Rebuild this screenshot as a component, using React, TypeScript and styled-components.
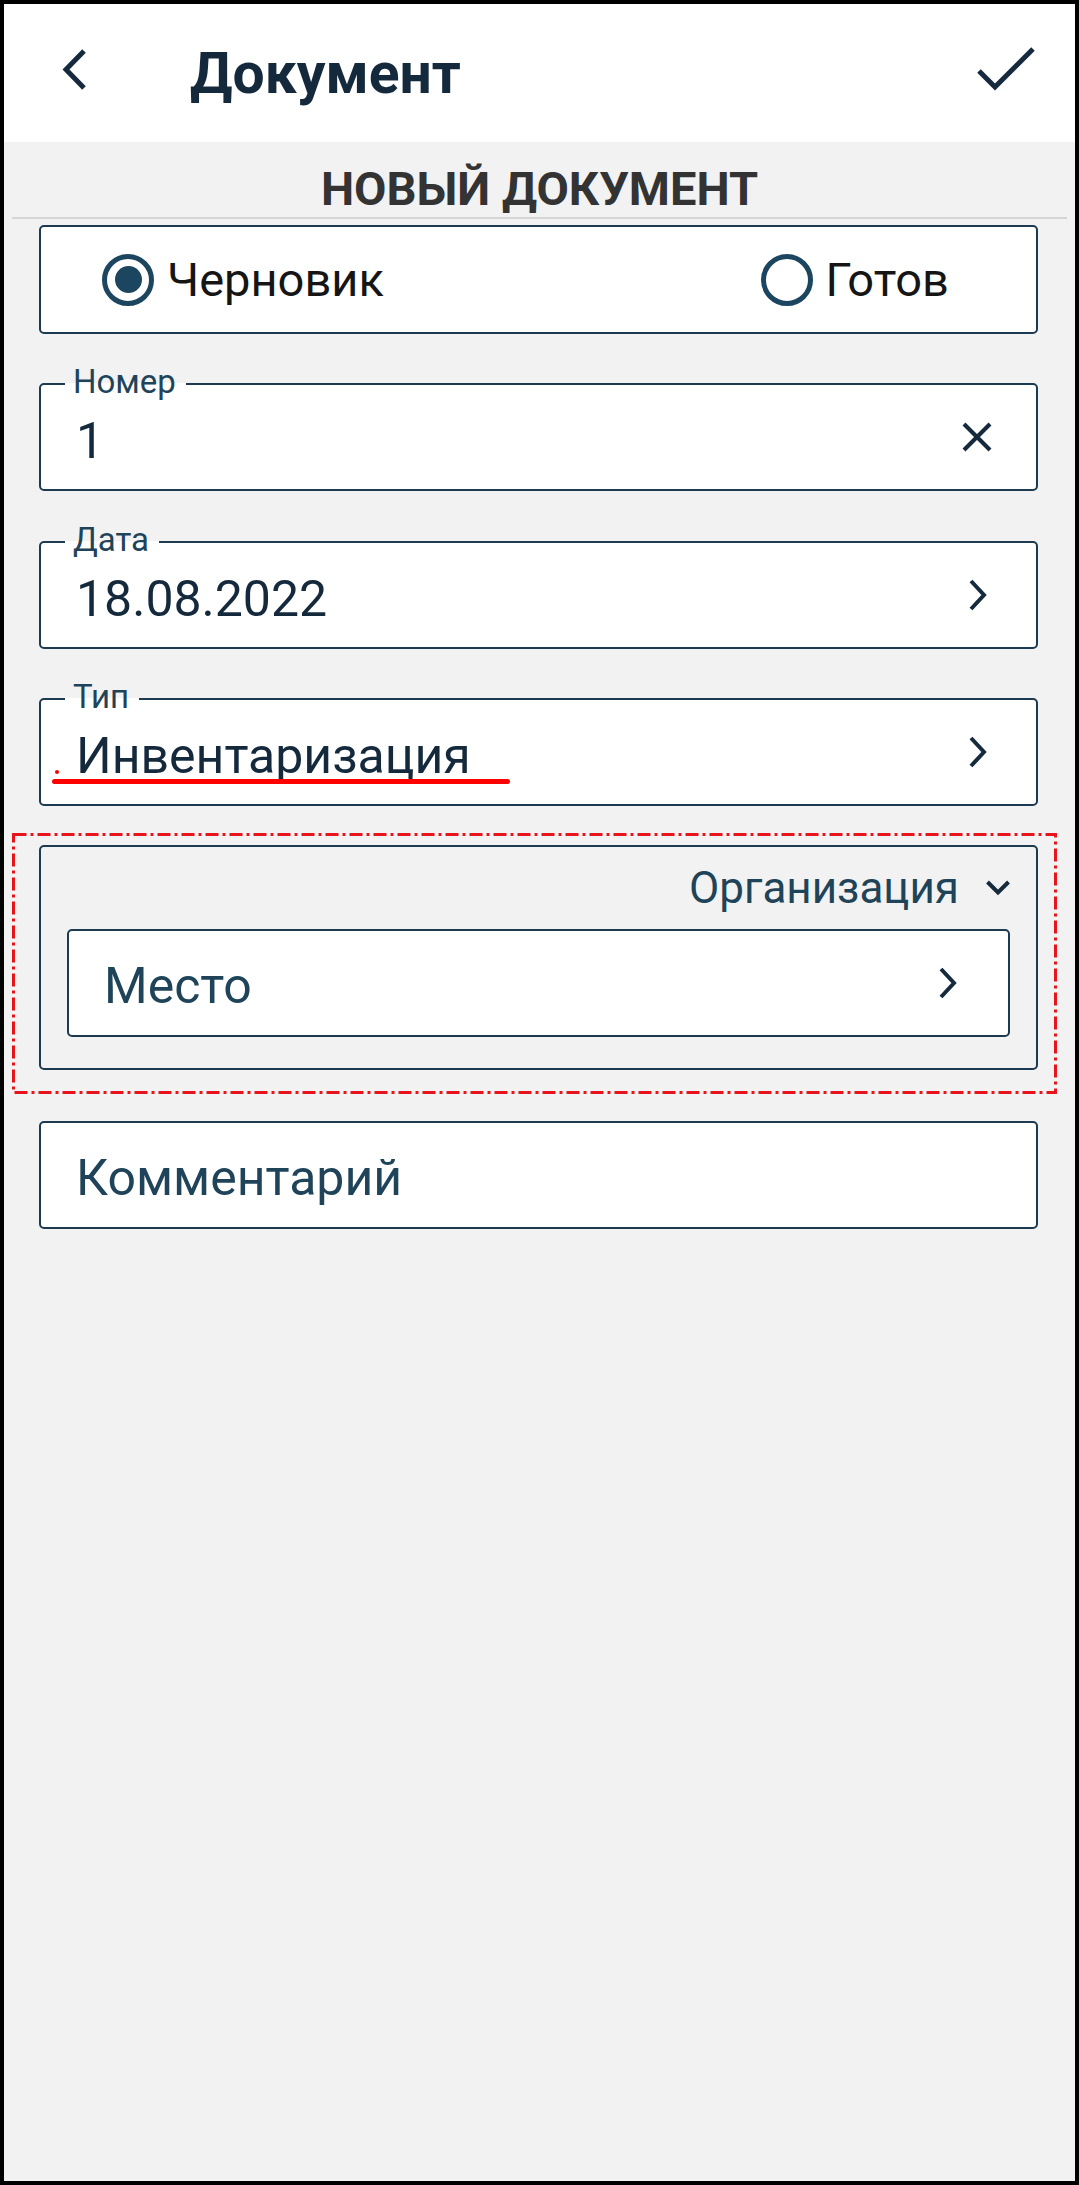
import * as React from 'react';
import styled, { createGlobalStyle } from 'styled-components';

const GlobalStyle = createGlobalStyle`
    html, body { margin: 0; padding: 0; background: #000; }
    body { font-family: Roboto, "Noto Sans", "DejaVu Sans", sans-serif; }
    * { box-sizing: border-box; }
`;

const ink = '#15293c';
const teal = '#1f4459';
const line = '#1d3b50';

const Page = styled.div`
    width: 1079px;
    height: 2185px;
    border: 4px solid #000;
    background: #f2f2f2;
    display: flex;
    flex-direction: column;
`;

const Toolbar = styled.div`
    height: 138px;
    background: #fff;
    display: flex;
    flex-direction: row;
    align-items: center;
    padding-left: 58px;
    padding-right: 33px;
`;

const ToolbarTitle = styled.div`
    flex: 1;
    margin-left: 98px;
    font-size: 57px;
    font-weight: 700;
    color: ${ink};
    line-height: 1;
`;

const SectionTitle = styled.div`
    height: 77px;
    margin: 0 8px;
    padding-top: 18px;
    border-bottom: 2px solid #d6d6d6;
    display: flex;
    align-items: center;
    justify-content: center;
    font-size: 47px;
    font-weight: 700;
    color: #333;
`;

const Form = styled.div`
    display: flex;
    flex-direction: column;
    padding: 0 37px 0 35px;
    margin-top: 6px;
`;

const Box = styled.div<{ $gap?: number; $height?: number; $plain?: boolean }>`
    position: relative;
    margin-top: ${p => p.$gap ?? 0}px;
    height: ${p => p.$height ?? 108}px;
    border: 2px solid ${line};
    border-radius: 5px;
    background: ${p => (p.$plain ? 'transparent' : '#fff')};
`;

const RadioRow = styled(Box)`
    display: flex;
    flex-direction: row;
    align-items: center;
    justify-content: space-between;
    padding: 0 87px 0 61px;
`;

const RadioOption = styled.div`
    display: flex;
    flex-direction: row;
    align-items: center;
    gap: 13px;
    font-size: 47px;
    color: #151515;
`;

const RadioCircle = styled.div<{ $on?: boolean }>`
    width: 52px;
    height: 52px;
    border-radius: 50%;
    border: 5px solid #1c4560;
    display: flex;
    align-items: center;
    justify-content: center;
    &::after {
        content: '';
        display: ${p => (p.$on ? 'block' : 'none')};
        width: 27px;
        height: 27px;
        border-radius: 50%;
        background: #1c4560;
    }
`;

const FieldRow = styled(Box)`
    display: flex;
    flex-direction: row;
    align-items: center;
    padding-left: 35px;
`;

const FieldLabel = styled.div`
    position: absolute;
    top: -20px;
    left: 24px;
    padding: 0 10px 0 8px;
    font-size: 33px;
    line-height: 33px;
    color: ${teal};
    background: linear-gradient(to bottom, #f2f2f2 0, #f2f2f2 18px, #fff 18px, #fff 100%);
`;

const FieldValue = styled.div<{ $muted?: boolean; $shift?: number }>`
    flex: 1;
    margin-top: ${p => p.$shift ?? 8}px;
    font-size: 50px;
    line-height: 1.2;
    color: ${p => (p.$muted ? teal : ink)};
`;

const Marked = styled.span`
    position: relative;
    &::before {
        content: '';
        position: absolute;
        left: -21px;
        bottom: 11px;
        width: 4px;
        height: 4px;
        border-radius: 50%;
        background: #f00;
    }
    &::after {
        content: '';
        position: absolute;
        left: -24px;
        right: -39px;
        bottom: 1px;
        height: 5px;
        border-radius: 3px;
        background: #f00;
    }
`;

const Icon = styled.svg<{ $right: number }>`
    flex: none;
    margin-right: ${p => p.$right}px;
    fill: none;
    stroke: #162a3e;
`;

const GroupWrap = styled.div`
    position: relative;
    margin-top: 39px;
`;

const GroupHeader = styled.div`
    height: 82px;
    display: flex;
    flex-direction: row;
    align-items: center;
    justify-content: flex-end;
    padding-right: 23px;
    gap: 24px;
    font-size: 44px;
    color: ${teal};
`;

const GroupBody = styled.div`
    padding: 0 26px 31px 26px;
`;

const DashFrame = styled.svg`
    position: absolute;
    left: -27px;
    top: -12px;
    pointer-events: none;
`;

function ChevronRight(props: { right: number })
{
    return (
        <Icon $right={props.right} width="24" height="36" viewBox="0 0 24 36" strokeWidth="4">
            <polyline points="6,4 19,18 6,32" />
        </Icon>
    );
}

function Clear()
{
    return (
        <Icon $right={41} width="36" height="36" viewBox="0 0 36 36" strokeWidth="4">
            <line x1="5" y1="5" x2="31" y2="31" />
            <line x1="31" y1="5" x2="5" y2="31" />
        </Icon>
    );
}

function Field(props: { label?: string, value: string, gap?: number, muted?: boolean, shift?: number, children?: React.ReactNode })
{
    return (
        <FieldRow $gap={props.gap}>
            {props.label ? <FieldLabel>{props.label}</FieldLabel> : <></>}
            <FieldValue $muted={props.muted} $shift={props.shift}>{props.value}</FieldValue>
            {props.children}
        </FieldRow>
    );
}

export default function App()
{
    return (
        <>
            <GlobalStyle />
            <Page>
                <Toolbar>
                    <Icon $right={0} width="30" height="56" viewBox="0 0 30 56" strokeWidth="5">
                        <polyline points="22,6 4,24.5 22,43" />
                    </Icon>
                    <ToolbarTitle>Документ</ToolbarTitle>
                    <Icon $right={0} width="72" height="56" viewBox="0 0 72 56" strokeWidth="5">
                        <polyline points="9,26 25,42 63,4" />
                    </Icon>
                </Toolbar>

                <SectionTitle>НОВЫЙ ДОКУМЕНТ</SectionTitle>

                <Form>
                    <RadioRow $height={109}>
                        <RadioOption>
                            <RadioCircle $on />
                            Черновик
                        </RadioOption>
                        <RadioOption>
                            <RadioCircle />
                            Готов
                        </RadioOption>
                    </RadioRow>

                    <Field label="Номер" value="1" gap={49}>
                        <Clear />
                    </Field>

                    <Field label="Дата" value="18.08.2022" gap={50}>
                        <ChevronRight right={47} />
                    </Field>

                    <FieldRow $gap={49}>
                        <FieldLabel>Тип</FieldLabel>
                        <FieldValue><Marked>Инвентаризация</Marked></FieldValue>
                        <ChevronRight right={47} />
                    </FieldRow>

                    <GroupWrap>
                        <Box $plain $height={225}>
                            <GroupHeader>
                                Организация
                                <Icon $right={0} width="30" height="20" viewBox="0 0 30 20" strokeWidth="4">
                                    <polyline points="4.5,4 15,14.5 25.5,4" />
                                </Icon>
                            </GroupHeader>
                            <GroupBody>
                                <Field value="Место" muted shift={5}>
                                    <ChevronRight right={49} />
                                </Field>
                            </GroupBody>
                        </Box>
                        <DashFrame width="1045" height="261" viewBox="0 0 1045 261">
                            <rect x="1.5" y="1.5" width="1042" height="258" fill="none" stroke="#e8141b"
                                strokeWidth="3" strokeDasharray="13 4 3 4" />
                        </DashFrame>
                    </GroupWrap>

                    <Field value="Комментарий" gap={51} muted shift={5} />
                </Form>
            </Page>
        </>
    );
}
